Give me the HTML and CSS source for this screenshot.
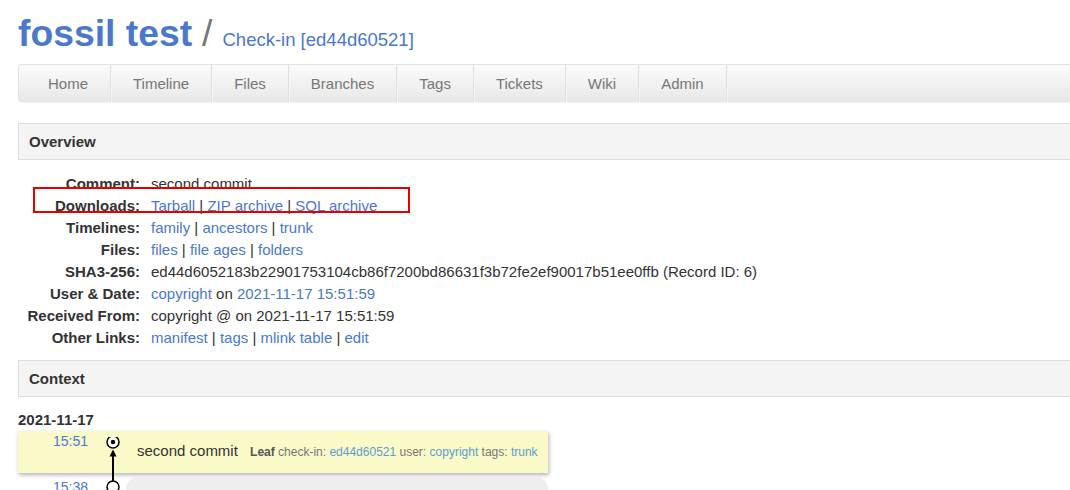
FILE: index.html
```html
<!DOCTYPE html>
<html lang="en">
<head>
    <meta charset="UTF-8">
    <title>fossil test: Check-in [ed44d60521]</title>
    <link rel="stylesheet" href="styles.css">
</head>
<body>

    <div class="page">
        <!-- Header -->
        <div class="header">
            <h1 class="title">fossil test</h1>
            <span class="slash">/</span>
            <a class="subtitle" href="#">Check-in [ed44d60521]</a>
        </div>

        <!-- Main menu -->
        <div class="mainmenu">
            <a href="#">Home</a>
            <a href="#">Timeline</a>
            <a href="#">Files</a>
            <a href="#">Branches</a>
            <a href="#">Tags</a>
            <a href="#">Tickets</a>
            <a href="#">Wiki</a>
            <a href="#">Admin</a>
        </div>

        <!-- Overview -->
        <div class="section">Overview</div>
        <div class="info">
            <div class="label">Comment:</div>
            <div>second commit</div>

            <div class="label">Downloads:</div>
            <div><a href="#">Tarball</a> | <a href="#">ZIP archive</a> | <a href="#">SQL archive</a></div>

            <div class="label">Timelines:</div>
            <div><a href="#">family</a> | <a href="#">ancestors</a> | <a href="#">trunk</a></div>

            <div class="label">Files:</div>
            <div><a href="#">files</a> | <a href="#">file ages</a> | <a href="#">folders</a></div>

            <div class="label">SHA3-256:</div>
            <div>ed44d6052183b22901753104cb86f7200bd86631f3b72fe2ef90017b51ee0ffb (Record ID: 6)</div>

            <div class="label">User &amp; Date:</div>
            <div><a href="#">copyright</a> on <a href="#">2021-11-17 15:51:59</a></div>

            <div class="label">Received From:</div>
            <div>copyright @ on 2021-11-17 15:51:59</div>

            <div class="label">Other Links:</div>
            <div><a href="#">manifest</a> | <a href="#">tags</a> | <a href="#">mlink table</a> | <a href="#">edit</a></div>
        </div>

        <!-- Context -->
        <div class="section context">Context</div>
        <div class="day">2021-11-17</div>

        <div class="timeline">
            <div class="tl-row selected">
                <div class="tl-time"><a href="#">15:51</a></div>
                <div class="tl-graph"></div>
                <div class="tl-cell">
                    <span class="tl-comment">second commit</span>
                    <span class="tl-detail"><b>Leaf</b> check-in: <a href="#">ed44d60521</a> user: <a href="#">copyright</a> tags: <a href="#">trunk</a></span>
                </div>
            </div>
            <div class="tl-row next">
                <div class="tl-time"><a href="#">15:38</a></div>
                <div class="tl-graph"></div>
                <div class="tl-cell plain">initial empty check-in</div>
            </div>

            <!-- graph rails -->
            <svg class="tl-rail" width="30" height="60" viewBox="0 0 30 60">
                <line x1="15" y1="16" x2="15" y2="44" stroke="#000" stroke-width="2"/>
                <polygon points="15,12.5 11.5,19.5 18.5,19.5" fill="#000"/>
                <circle cx="15" cy="5" r="6" fill="#fff" stroke="#000" stroke-width="1.5"/>
                <circle cx="15" cy="5" r="2.2" fill="#000"/>
                <circle cx="15" cy="50" r="6" fill="#fff" stroke="#000" stroke-width="1.5"/>
            </svg>
        </div>
    </div>

    <!-- annotation box -->
    <div class="highlight"></div>

</body>
</html>
```

FILE: styles.css
```css
html {
    overflow: hidden;
}

body {
    margin: 0;
    font-family: "Liberation Sans", Arial, sans-serif;
    font-size: 15px;
    color: #333;
    background: #fff;
}

a {
    color: #4a78cc;
    text-decoration: none;
}

.page {
    width: 1100px;
    padding-left: 18px;
}

/* header */
.header {
    display: flex;
    align-items: baseline;
    padding-top: 13px;
}

.title {
    margin: 0;
    font-size: 37.3px;
    line-height: 40px;
    font-weight: bold;
    color: #4a78cc;
}

.slash {
    font-size: 37.3px;
    line-height: 40px;
    color: #777;
    margin: 0 10px 0 10px;
}

.subtitle {
    font-size: 18.5px;
}

/* menu */
.mainmenu {
    display: flex;
    margin-top: 11px;
    height: 37px;
    border: 1px solid #e2e2e2;
    border-bottom: none;
    border-radius: 4px;
    background: linear-gradient(#fbfbfb, #e8e8e8);
    box-shadow: 0 1px 2px rgba(0, 0, 0, 0.06);
}

.mainmenu a {
    display: block;
    line-height: 37px;
    padding: 0 22px;
    color: #777;
    border-right: 1px solid #e0e0e0;
    box-shadow: 1px 0 0 #f6f6f6;
}

.mainmenu a:first-child {
    padding-left: 29px;
}

/* sections */
.section {
    margin-top: 21px;
    height: 35px;
    line-height: 35px;
    padding-left: 10px;
    border: 1px solid #dcdcdc;
    background: #f4f4f4;
    font-weight: bold;
    color: #333;
}

.section.context {
    margin-top: 11px;
}

.info {
    display: grid;
    grid-template-columns: 122px auto;
    column-gap: 11px;
    margin-top: 13px;
    line-height: 22px;
}

.info .label {
    text-align: right;
    font-weight: bold;
}

/* timeline */
.day {
    margin-top: 12px;
    line-height: 22px;
    font-weight: bold;
}

.timeline {
    position: relative;
    width: 530px;
}

.tl-row {
    display: flex;
}

.tl-row.selected {
    background: #fafac8;
    box-shadow: 1px 2px 4px rgba(0, 0, 0, 0.3);
}

.tl-row.next {
    padding-top: 4px;
}

.tl-time {
    width: 70px;
    text-align: right;
    font-size: 14px;
    line-height: 18px;
    padding-top: 1px;
}

.tl-graph {
    width: 38px;
    flex: none;
}

.tl-cell {
    flex: 1;
    padding: 11px 0 12px 11px;
    line-height: 18px;
    white-space: nowrap;
}

.tl-cell.plain {
    background: #eee;
    border-radius: 12px 12px 0 0;
    color: #eee;
}

.tl-comment {
    margin-right: 8px;
}

.tl-detail {
    font-size: 12px;
    color: #777;
}

.tl-detail b {
    color: #555;
}

.tl-detail a {
    color: #5d9ccf;
}

.tl-rail {
    position: absolute;
    left: 80px;
    top: 6px;
}

/* red annotation */
.highlight {
    position: absolute;
    left: 33px;
    top: 187px;
    width: 373px;
    height: 22px;
    border: 2px solid #e60000;
}
```
